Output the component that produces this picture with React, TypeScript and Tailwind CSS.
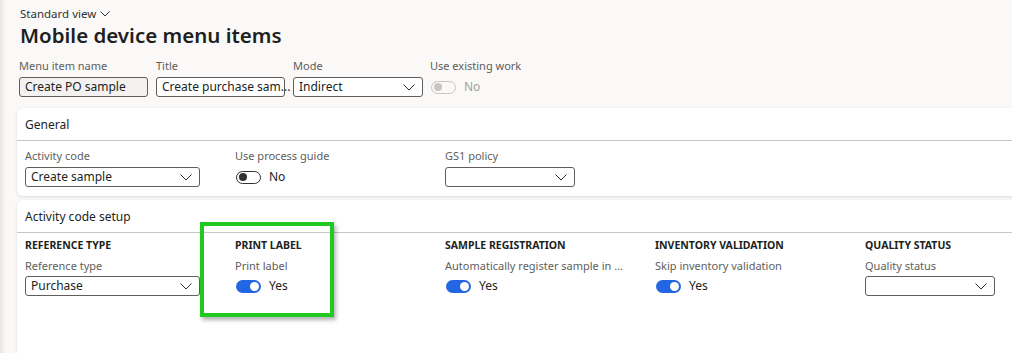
import React from 'react';

const font = { fontFamily: '"Noto Sans", "Open Sans", sans-serif' };

function Chevron({ className = '' }: { className?: string }) {
  return (
    <svg className={className} width="12" height="7" viewBox="0 0 12 7" fill="none">
      <path d="M0.5 0.5L6 6L11.5 0.5" stroke="#323130" strokeWidth="1" />
    </svg>
  );
}

function Select({ value, width }: { value?: string; width: string }) {
  return (
    <div
      className={`${width} h-[20px] bg-white border border-[#605e5c] rounded-[3px] flex items-center justify-between pl-[5px] pr-[7px]`}
    >
      <span className="text-[12px] leading-[16px] text-[#201f1e] truncate">{value}</span>
      <Chevron />
    </div>
  );
}

function Toggle({ on, disabled, text }: { on?: boolean; disabled?: boolean; text: string }) {
  return (
    <div className="h-[20px] flex items-center gap-[8px] pl-[1px]">
      {on ? (
        <div className="w-[25px] h-[13px] rounded-full bg-[#2266e3] flex items-center justify-end pr-[2px]">
          <div className="w-[9px] h-[9px] rounded-full bg-white" />
        </div>
      ) : (
        <div
          className={`w-[25px] h-[13px] rounded-full border flex items-center pl-[2px] ${
            disabled ? 'border-[#c8c6c4]' : 'border-[#323130]'
          }`}
        >
          <div className={`w-[8px] h-[8px] rounded-full ${disabled ? 'bg-[#c8c6c4]' : 'bg-[#323130]'}`} />
        </div>
      )}
      <span className={`text-[12px] leading-[16px] ${disabled ? 'text-[#a19f9d]' : 'text-[#201f1e]'}`}>{text}</span>
    </div>
  );
}

function Label({ children, muted }: { children: React.ReactNode; muted?: boolean }) {
  return (
    <div className={`h-[16px] text-[11px] leading-[16px] whitespace-nowrap ${muted ? 'text-[#a19f9d]' : 'text-[#605e5c]'}`}>
      {children}
    </div>
  );
}

function CardHeader({ title }: { title: string }) {
  return (
    <div className="h-[33px] border-b border-[#c8c6c4] flex items-center px-[8px] pt-[2px]">
      <span className="text-[12px] leading-[16px] text-[#201f1e]">{title}</span>
    </div>
  );
}

export default function App() {
  return (
    <div style={font} className="w-[1012px] h-[353px] overflow-hidden bg-[#faf9f8] flex">
      <div className="w-[6px] shrink-0 bg-gradient-to-r from-[#e8e6e4] to-[#faf9f8]" />
      <div className="flex-1 pl-[11px] min-w-0">
        <div className="pl-[3px]">
          <div className="mt-[7px] h-[14px] flex items-center gap-[4px] text-[11.5px] leading-[14px] text-[#323130]">
            <span>Standard view</span>
            <svg width="10" height="6" viewBox="0 0 10 6" fill="none">
              <path d="M0.5 0.5L5 5L9.5 0.5" stroke="#323130" strokeWidth="1" />
            </svg>
          </div>
          <h1 className="h-[28px] text-[20.5px] leading-[28px] font-semibold text-[#201f1e]">
            Mobile device menu items
          </h1>
        </div>

        <div className="mt-[9px] pl-[2px] flex">
          <div className="w-[137px]">
            <Label>Menu item name</Label>
            <div className="mt-[3px] w-[129px] h-[20px] bg-[#f3f2f1] border border-[#605e5c] rounded-[3px] flex items-center pl-[5px]">
              <span className="text-[12px] leading-[16px] text-[#201f1e]">Create PO sample</span>
            </div>
          </div>
          <div className="w-[137px]">
            <Label>Title</Label>
            <div className="mt-[3px] w-[129px] h-[20px] bg-white border border-[#605e5c] rounded-[3px] flex items-center pl-[5px]">
              <span className="text-[12px] leading-[16px] text-[#201f1e] whitespace-nowrap">Create purchase sam...</span>
            </div>
          </div>
          <div className="w-[137px]">
            <Label>Mode</Label>
            <div className="mt-[3px]">
              <Select value="Indirect" width="w-[130px]" />
            </div>
          </div>
          <div className="w-[137px]">
            <Label>Use existing work</Label>
            <div className="mt-[3px]">
              <Toggle disabled text="No" />
            </div>
          </div>
        </div>

        <div className="mt-[11px] w-[1100px] h-[88px] bg-white rounded-[6px] shadow-[0_1px_3px_rgba(0,0,0,0.12)]">
          <CardHeader title="General" />
          <div className="flex px-[8px] pt-[7px]">
            <div className="w-[210px]">
              <Label>Activity code</Label>
              <div className="mt-[3px]">
                <Select value="Create sample" width="w-[175px]" />
              </div>
            </div>
            <div className="w-[210px]">
              <Label>Use process guide</Label>
              <div className="mt-[3px]">
                <Toggle text="No" />
              </div>
            </div>
            <div className="w-[210px]">
              <Label>GS1 policy</Label>
              <div className="mt-[3px]">
                <Select width="w-[130px]" />
              </div>
            </div>
          </div>
        </div>

        <div className="relative mt-[4px] w-[1100px] h-[200px] bg-white rounded-[6px] shadow-[0_1px_3px_rgba(0,0,0,0.12)]">
          <CardHeader title="Activity code setup" />
          <div className="flex px-[8px] pt-[4px]">
            {[
              { h: 'REFERENCE TYPE', l: 'Reference type', c: <Select value="Purchase" width="w-[175px]" /> },
              { h: 'PRINT LABEL', l: 'Print label', c: <Toggle on text="Yes" /> },
              { h: 'SAMPLE REGISTRATION', l: 'Automatically register sample in ...', c: <Toggle on text="Yes" /> },
              { h: 'INVENTORY VALIDATION', l: 'Skip inventory validation', c: <Toggle on text="Yes" /> },
              { h: 'QUALITY STATUS', l: 'Quality status', c: <Select width="w-[130px]" /> },
            ].map((col) => (
              <div key={col.h} className="w-[210px]">
                <div className="h-[16px] text-[10.5px] leading-[16px] font-bold text-[#201f1e] whitespace-nowrap">
                  {col.h}
                </div>
                <div className="mt-[5px]">
                  <Label>{col.l}</Label>
                </div>
                <div className="mt-[2px]">{col.c}</div>
              </div>
            ))}
          </div>
          <div className="absolute left-[183px] top-[22px] w-[134px] h-[95px] border-4 border-[#1fc91f] shadow-[2px_3px_4px_rgba(0,0,0,0.3)]" />
        </div>
      </div>
    </div>
  );
}
